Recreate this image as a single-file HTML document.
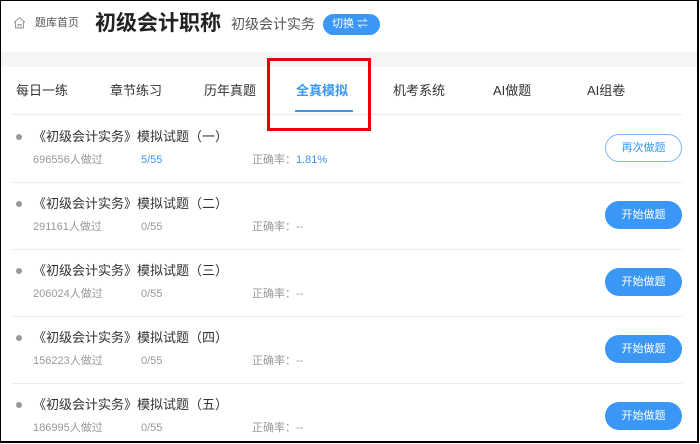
<!DOCTYPE html>
<html><head><meta charset="utf-8"><style>
*{margin:0;padding:0;box-sizing:border-box}
body{width:700px;height:444px;overflow:hidden;background:#fff;font-family:"Liberation Sans","Noto Sans CJK SC",sans-serif;position:relative}
.frame{position:absolute;left:0;top:0;width:699px;height:443px;border:1px solid #000;border-right:2px solid #000;border-bottom:2px solid #000}
.abs{position:absolute;white-space:nowrap}
.band{position:absolute;left:1px;top:52px;width:696px;height:15px;background:#f5f5f5}
.tab{position:absolute;top:83px;font-size:13px;line-height:16px;color:#333}
.line{position:absolute;left:12px;width:670px;height:1px;background:#ececec}
.bullet{position:absolute;left:16px;width:6px;height:6px;border-radius:50%;background:#999}
.title{position:absolute;left:33px;font-size:13px;line-height:16px;color:#333}
.meta{position:absolute;font-size:11px;line-height:14px;color:#999}
.btn{position:absolute;left:605px;width:77px;height:28px;border-radius:14px;background:#3a97f5;color:#fff;font-size:11px;text-align:center;line-height:28px}
.btn.o{background:#fff;border:1px solid #7ab8f7;color:#3a97f5;line-height:26px}
</style></head><body>
<svg class="abs" style="left:13px;top:16px" width="13" height="13" viewBox="0 0 13 13"><path d="M1 6.5L6.5 1.5L12 6.5M2.5 5.5V12H10.5V5.5M5 12V8.5H8V12" fill="none" stroke="#999" stroke-width="1"/></svg>
<div class="abs" style="left:35px;top:16px;font-size:11px;line-height:14px;color:#555">题库首页</div>
<div class="abs" style="left:95px;top:11px;font-size:21px;line-height:26px;font-weight:bold;color:#222">初级会计职称</div>
<div class="abs" style="left:231px;top:15px;font-size:14px;line-height:18px;color:#555">初级会计实务</div>
<div class="abs" style="left:323px;top:14px;width:57px;height:21px;border-radius:11px;background:#3a97f5;color:#fff;font-size:11px;line-height:21px;padding-left:9px">切换 ⇌</div>
<div class="band"></div>
<div class="tab" style="left:16px">每日一练</div>
<div class="tab" style="left:110px">章节练习</div>
<div class="tab" style="left:204px">历年真题</div>
<div class="tab" style="left:296px;color:#3a97f5;font-weight:bold">全真模拟</div>
<div class="abs" style="left:295px;top:110px;width:58px;height:2px;background:#3a97f5"></div>
<div class="tab" style="left:393px">机考系统</div>
<div class="tab" style="left:493px">AI做题</div>
<div class="tab" style="left:587px">AI组卷</div>
<div class="line" style="top:114px"></div>
<div class="abs" style="left:267px;top:58px;width:104px;height:73px;border:3px solid #e8000b"></div>

<div class="bullet" style="top:134px"></div><div class="title" style="top:129px">《初级会计实务》模拟试题（一）</div>
<div class="meta" style="left:33px;top:153px">696556人做过</div><div class="meta" style="left:141px;top:153px;color:#3a97f5">5/55</div><div class="meta" style="left:252px;top:153px">正确率：<span style="color:#3a97f5">1.81%</span></div>
<div class="btn o" style="top:134px">再次做题</div>
<div class="line" style="top:182px"></div>

<div class="bullet" style="top:201px"></div><div class="title" style="top:196px">《初级会计实务》模拟试题（二）</div>
<div class="meta" style="left:33px;top:220px">291161人做过</div><div class="meta" style="left:141px;top:220px">0/55</div><div class="meta" style="left:252px;top:220px">正确率：--</div>
<div class="btn" style="top:201px">开始做题</div>
<div class="line" style="top:249px"></div>

<div class="bullet" style="top:268px"></div><div class="title" style="top:263px">《初级会计实务》模拟试题（三）</div>
<div class="meta" style="left:33px;top:287px">206024人做过</div><div class="meta" style="left:141px;top:287px">0/55</div><div class="meta" style="left:252px;top:287px">正确率：--</div>
<div class="btn" style="top:268px">开始做题</div>
<div class="line" style="top:316px"></div>

<div class="bullet" style="top:335px"></div><div class="title" style="top:330px">《初级会计实务》模拟试题（四）</div>
<div class="meta" style="left:33px;top:354px">156223人做过</div><div class="meta" style="left:141px;top:354px">0/55</div><div class="meta" style="left:252px;top:354px">正确率：--</div>
<div class="btn" style="top:335px">开始做题</div>
<div class="line" style="top:383px"></div>

<div class="bullet" style="top:402px"></div><div class="title" style="top:397px">《初级会计实务》模拟试题（五）</div>
<div class="meta" style="left:33px;top:421px">186995人做过</div><div class="meta" style="left:141px;top:421px">0/55</div><div class="meta" style="left:252px;top:421px">正确率：--</div>
<div class="btn" style="top:402px">开始做题</div>
<div class="frame"></div>
</body></html>
